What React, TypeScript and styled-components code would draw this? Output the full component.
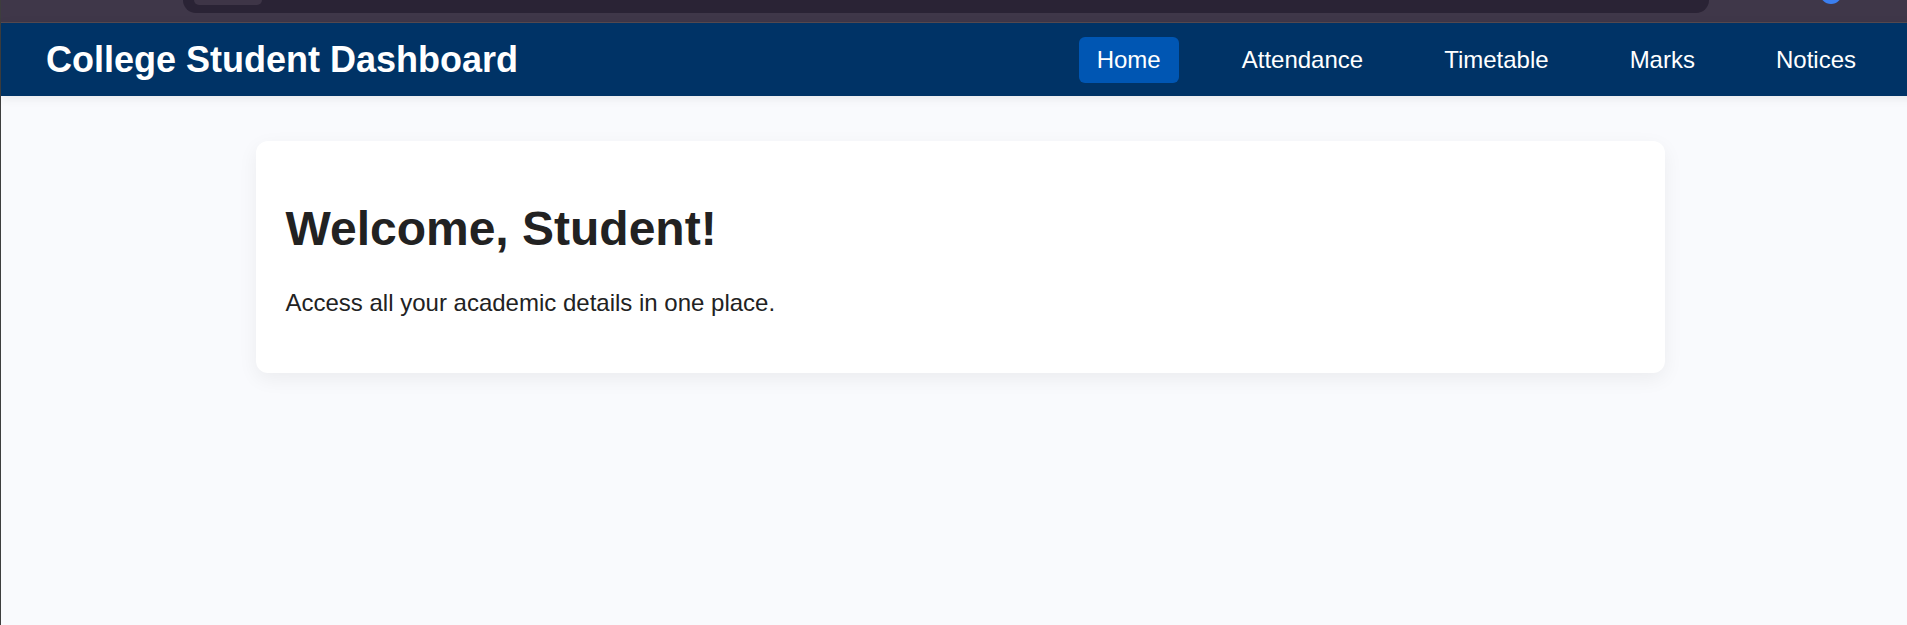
import React from 'react';
import styled, { createGlobalStyle } from 'styled-components';

const navItems = ['Home', 'Attendance', 'Timetable', 'Marks', 'Notices'];

export default function App() {
  return (
    <>
      <GlobalStyle />
      <Window>
        <BrowserStrip>
          <AddressBar>
            <TabPill />
          </AddressBar>
          <ProfileDot />
        </BrowserStrip>
        <Header>
          <SiteTitle>College Student Dashboard</SiteTitle>
          <Nav>
            {navItems.map((item) => (
              <NavLink key={item} active={item === 'Home'}>
                {item}
              </NavLink>
            ))}
          </Nav>
        </Header>
        <Main>
          <WelcomeCard>
            <WelcomeTitle>Welcome, Student!</WelcomeTitle>
            <WelcomeText>Access all your academic details in one place.</WelcomeText>
          </WelcomeCard>
        </Main>
      </Window>
    </>
  );
}

const GlobalStyle = createGlobalStyle`
  html, body {
    margin: 0;
    padding: 0;
    overflow: hidden;
    background: #f9fafd;
  }
  body {
    font-family: "Liberation Sans", Arial, sans-serif;
  }
`;

const Window = styled.div`
  width: 1918px;
  min-height: 625px;
  border-left: 1px solid #3e3e3e;
  background: #f9fafd;
  display: flex;
  flex-direction: column;
`;

const BrowserStrip = styled.div`
  height: 22px;
  background: #3f3749;
  border-bottom: 1px solid #574a50;
  display: flex;
  align-items: flex-start;
  overflow: hidden;
`;

const AddressBar = styled.div`
  margin-left: 182px;
  width: 1526px;
  height: 13px;
  background: #2a2335;
  border-radius: 0 0 13px 13px;
  display: flex;
  align-items: flex-start;
`;

const TabPill = styled.div`
  margin-left: 11px;
  width: 68px;
  height: 5px;
  background: #3e3547;
  border-radius: 0 0 8px 8px;
`;

const ProfileDot = styled.div`
  margin-left: 111px;
  margin-top: -18px;
  width: 22px;
  height: 22px;
  border-radius: 50%;
  background: #3b7ff0;
`;

const Header = styled.header`
  height: 73px;
  background: #003366;
  padding: 0 45px;
  display: flex;
  align-items: center;
  justify-content: space-between;
  box-shadow: 0 2px 10px rgba(0, 0, 0, 0.08);
`;

const SiteTitle = styled.h1`
  margin: 0;
  color: #ffffff;
  font-size: 36px;
  font-weight: 700;
`;

const Nav = styled.nav`
  display: flex;
  align-items: center;
  gap: 45px;
`;

const NavLink = styled.a<{ active?: boolean }>`
  display: block;
  padding: 9px 18px;
  border-radius: 6px;
  font-size: 24px;
  color: #ffffff;
  text-decoration: none;
  background: ${({ active }) => (active ? '#0056b3' : 'transparent')};
`;

const Main = styled.main`
  padding: 45px 0 0;
  display: flex;
  justify-content: center;
`;

const WelcomeCard = styled.section`
  width: 1409px;
  box-sizing: border-box;
  padding: 30px;
  background: #ffffff;
  border-radius: 12px;
  box-shadow: 0 6px 20px rgba(0, 0, 0, 0.06);
`;

const WelcomeTitle = styled.h2`
  margin: 30px 0 33px;
  font-size: 48px;
  font-weight: 700;
  color: #222222;
`;

const WelcomeText = styled.p`
  margin: 0 0 26px;
  font-size: 24px;
  color: #222222;
`;
